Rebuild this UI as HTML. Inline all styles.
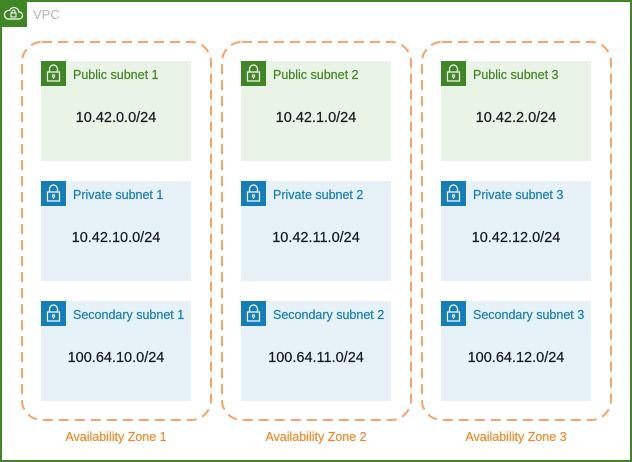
<!DOCTYPE html><html><head><style>
body{margin:0;width:632px;height:462px;position:relative;background:#fff;font-family:"Liberation Sans",sans-serif;overflow:hidden}
.vpc{position:absolute;left:0;top:0;width:628px;height:458px;border:2px solid #3f8624}
.sn{position:absolute;width:150px;height:100px}
.pub{background:#e9f3e6}.pri{background:#e6f2f8}
.ic{position:absolute;left:0;top:0;width:25px;height:25px}
.lb{position:absolute;left:32px;top:7px;font-size:12.5px;white-space:nowrap;-webkit-text-stroke:0.2px currentColor}
.cidr{position:absolute;left:0;width:150px;top:49px;text-align:center;font-size:14.5px;color:#16191f;-webkit-text-stroke:0.2px #16191f}
.az{position:absolute;width:190px;text-align:center;top:430px;font-size:12.5px;color:#ed8b2c;-webkit-text-stroke:0.2px #ed8b2c}
</style></head><body>
<div class="vpc"></div>
<svg style="position:absolute;left:0;top:0" width="632" height="462">
<rect x="0" y="0" width="27" height="27" fill="#3f8624"/>
<path d="M8 19h11a3.5 3.5 0 0 0 0-7 5 5 0 0 0-9.5-1.5A4 4 0 0 0 8 19z" fill="none" stroke="#fff" stroke-width="1.2"/>
<rect x="11" y="13" width="5" height="4" fill="none" stroke="#fff" stroke-width="1"/>
<path d="M12 13v-1.5a1.5 1.5 0 0 1 3 0V13" fill="none" stroke="#fff" stroke-width="1"/>
<text x="33" y="19" font-family="Liberation Sans,sans-serif" font-size="13" fill="#aab7b8">VPC</text>
<g fill="none" stroke="#f5a36a" stroke-width="2" stroke-dasharray="10 6">
<rect x="22" y="42" width="189" height="378" rx="20"/>
<rect x="222" y="42" width="189" height="378" rx="20"/>
<rect x="422" y="42" width="189" height="378" rx="20"/>
</g>
</svg>
<div id="c"></div>
<script>
var cols=[41,241,441],rows=[[61,'pub','Public subnet','#3f8624',['10.42.0.0/24','10.42.1.0/24','10.42.2.0/24']],[181,'pri','Private subnet','#147eba',['10.42.10.0/24','10.42.11.0/24','10.42.12.0/24']],[301,'pri','Secondary subnet','#147eba',['100.64.10.0/24','100.64.11.0/24','100.64.12.0/24']]];
var h='';
rows.forEach(function(r){cols.forEach(function(x,i){
h+='<div class="sn '+r[1]+'" style="left:'+x+'px;top:'+r[0]+'px"><svg class="ic" width="25" height="25"><rect width="25" height="25" fill="'+r[3]+'"/><rect x="6.5" y="11" width="12" height="9" fill="none" stroke="#fff" stroke-width="1.2"/><path d="M8.5 11V8a4 4 0 0 1 8 0v3" fill="none" stroke="#fff" stroke-width="1.2"/><circle cx="12.5" cy="15" r="1.2" fill="none" stroke="#fff"/><path d="M12.5 16v2" stroke="#fff"/></svg><div class="lb" style="color:'+r[3]+'">'+r[2]+' '+(i+1)+'</div><div class="cidr">'+r[4][i]+'</div></div>';});});
[21,221,421].forEach(function(x,i){h+='<div class="az" style="left:'+x+'px">Availability Zone '+(i+1)+'</div>';});
document.getElementById('c').innerHTML=h;
</script>
</body></html>
